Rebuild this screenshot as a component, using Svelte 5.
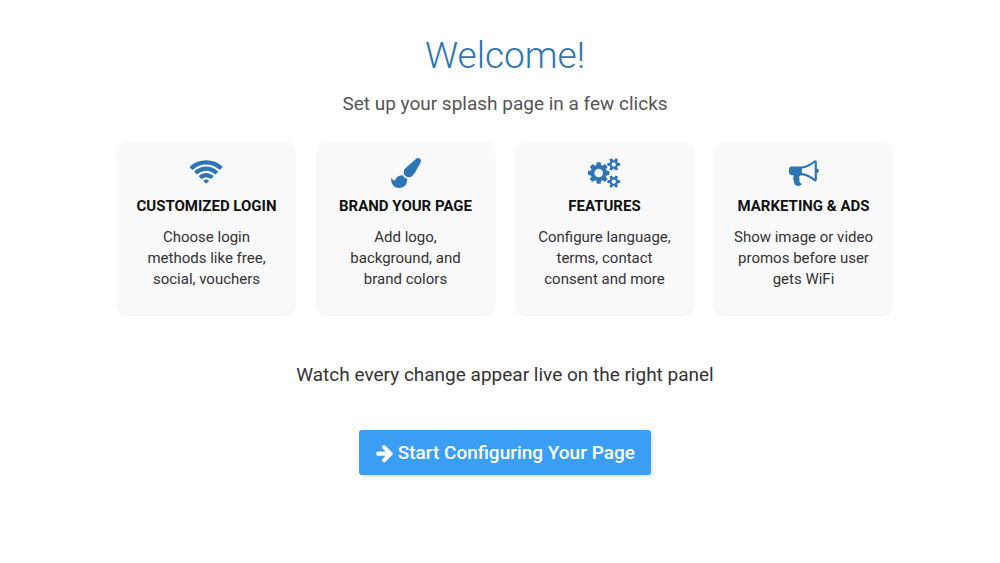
<script lang="ts">
	interface Feature {
		title: string;
		text: string;
		width: number;
		icon: string;
	}

	// icons share a 1792 unit em, width is the advance of the glyph
	const features: Feature[] = [
		{
			title: 'Customized login',
			text: 'Choose login methods like free, social, vouchers',
			width: 2048,
			icon: 'M1024 1523q-20 0-93-73.500t-73-93.500q0-32 62.500-54t103.500-22 103.500 22 62.500 54q0 20-73 93.500t-93 73.500zm270-271q-2 0-40-25t-101.500-50-128.500-25-128.500 25-101 50-40.500 25q-18 0-93.500-75t-75.500-93q0-13 10-23 78-77 196-121t233-44 233 44 196 121q10 10 10 23 0 18-75.500 93t-93.500 75zm273-272q-11 0-23-8-136-105-252-154.500t-268-49.500q-85 0-170.500 22t-149 53-113.500 62-79 53-31 22q-17 0-92-75t-75-93q0-12 10-22 132-132 320-205t380-73 380 73 320 205q10 10 10 22 0 18-75 93t-92 75zm271-271q-11 0-22-9-179-157-371.500-236.500t-420.500-79.500-420.500 79.500-371.500 236.500q-11 9-22 9-17 0-92.500-75t-75.500-93q0-13 10-23 187-186 445-288t527-102 527 102 445 288q10 10 10 23 0 18-75.500 93t-92.500 75z'
		},
		{
			title: 'Brand your page',
			text: 'Add logo, background, and brand colors',
			width: 1792,
			icon: 'M1615 0q70 0 122.500 46.500t52.500 116.500q0 63-45 151-332 629-465 752-97 91-218 91-126 0-216.500-92.500t-90.500-219.500q0-128 92-212l638-579q59-54 130-54zm-909 1034q39 76 106.500 130t150.500 76l1 71q4 213-129.500 347t-348.500 134q-123 0-218-46.500t-152.500-127.500-86.500-183-29-220q7 5 41 30t62 44.500 59 36.500 46 17q41 0 55-37 25-66 57.500-112.500t69.500-76 88-47.500 103-25.500 125-10.500z'
		},
		{
			title: 'Features',
			text: 'Configure language, terms, contact consent and more',
			width: 1920,
			icon: 'M896 896q0-106-75-181t-181-75-181 75-75 181 75 181 181 75 181-75 75-181zm768 512q0-52-38-90t-90-38-90 38-38 90q0 53 37.500 90.500t90.500 37.500 90.500-37.500 37.500-90.500zm0-1024q0-52-38-90t-90-38-90 38-38 90q0 53 37.500 90.500t90.500 37.500 90.500-37.500 37.500-90.500zm-384 421v185q0 10-7 19.500t-16 10.500l-155 24q-11 35-32 76 34 48 90 115 7 11 7 20 0 12-7 19-23 30-82.500 89.500t-78.500 59.500q-11 0-21-7l-115-90q-37 19-77 31-11 108-23 155-7 24-30 24h-186q-11 0-20-7.500t-10-17.500l-23-153q-34-10-75-31l-118 89q-7 7-20 7-11 0-21-8-144-133-144-160 0-9 7-19 10-14 41-53t47-61q-23-44-35-82l-152-24q-10-1-17-9.500t-7-19.500v-185q0-10 7-19.500t16-10.500l155-24q11-35 32-76-34-48-90-115-7-11-7-20 0-12 7-20 22-30 82-89t79-59q11 0 21 7l115 90q34-18 77-32 11-108 23-154 7-24 30-24h186q11 0 20 7.500t10 17.500l23 153q34 10 75 31l118-89q8-7 20-7 11 0 21 8 144 133 144 160 0 8-7 19-12 16-42 54t-45 60q23 48 34 82l152 23q10 2 17 10.500t7 19.500zm640 533v140q0 16-149 31-12 27-30 52 51 113 51 138 0 4-4 7-122 71-124 71-8 0-46-47t-52-68q-20 2-30 2t-30-2q-14 21-52 68t-46 47q-2 0-124-71-4-3-4-7 0-25 51-138-18-25-30-52-149-15-149-31v-140q0-16 149-31 13-29 30-52-51-113-51-138 0-4 4-7 4-2 35-20t59-34 30-16q8 0 46 46.500t52 67.500q20-2 30-2t30 2q51-71 92-112l6-2q4 0 124 70 4 3 4 7 0 25-51 138 17 23 30 52 149 15 149 31zm0-1024v140q0 16-149 31-12 27-30 52 51 113 51 138 0 4-4 7-122 71-124 71-8 0-46-47t-52-68q-20 2-30 2t-30-2q-14 21-52 68t-46 47q-2 0-124-71-4-3-4-7 0-25 51-138-18-25-30-52-149-15-149-31v-140q0-16 149-31 13-29 30-52-51-113-51-138 0-4 4-7 4-2 35-20t59-34 30-16q8 0 46 46.500t52 67.500q20-2 30-2t30 2q51-71 92-112l6-2q4 0 124 70 4 3 4 7 0 25-51 138 17 23 30 52 149 15 149 31z'
		},
		{
			title: 'Marketing & ads',
			text: 'Show image or video promos before user gets WiFi',
			width: 1792,
			icon: 'M1664 640q53 0 90.500 37.500t37.500 90.500-37.500 90.500-90.500 37.500v384q0 52-38 90t-90 38q-417-347-812-380-58 19-91 66t-31 100.500 40 92.500q-20 33-23 65.500t6 58 33.500 55 48 50 61.500 50.500q-29 58-111.500 83t-168.500 11.500-132-55.500q-7-23-29.500-87.500t-32-94.500-23-89-15-101 3.500-98.500 22-110.500h-122q-66 0-113-47t-47-113v-192q0-66 47-113t113-47h480q435 0 896-384 52 0 90 38t38 90v384zm-128 604v-954q-394 302-768 343v270q377 42 768 341z'
		}
	];
</script>

<main class="welcome">
	<h1>Welcome!</h1>
	<p class="lead">Set up your splash page in a few clicks</p>

	<div class="features">
		{#each features as feature}
			<section class="card">
				<svg class="card-icon" viewBox="0 0 {feature.width} 1792" aria-hidden="true">
					<path d={feature.icon} />
				</svg>
				<h2>{feature.title}</h2>
				<p>{feature.text}</p>
			</section>
		{/each}
	</div>

	<p class="hint">Watch every change appear live on the right panel</p>

	<button type="button" class="start">
		<svg viewBox="0 0 1664 1792" aria-hidden="true">
			<path
				d="M1600 960q0 54-37 91l-651 651q-39 37-91 37-51 0-90-37l-75-75q-38-38-38-91t38-91l293-293h-704q-52 0-84.500-37.500t-32.500-90.500v-128q0-53 32.500-90.500t84.500-37.500h704l-293-294q-38-36-38-90t38-90l75-75q38-38 90-38 53 0 91 38l651 651q37 35 37 90z"
			/>
		</svg>
		Start Configuring Your Page
	</button>
</main>

<style>
	:global(body) {
		margin: 0;
		background: #fff;
	}

	.welcome {
		display: flex;
		flex-direction: column;
		align-items: center;
		padding: 32px 20px 32px 30px;
		font-family: Roboto, 'Liberation Sans', sans-serif;
		color: #333;
		text-align: center;
	}

	h1 {
		margin: 0;
		font-size: 37px;
		font-weight: 300;
		line-height: 48px;
		color: #2e75b6;
	}

	.lead {
		margin: 10px 0 0;
		font-size: 19px;
		line-height: 28px;
		color: #555;
	}

	.features {
		display: grid;
		grid-template-columns: repeat(auto-fit, minmax(170px, 1fr));
		gap: 22px;
		width: 100%;
		max-width: 774px;
		margin-top: 24px;
	}

	.card {
		display: flex;
		flex-direction: column;
		align-items: center;
		padding: 16px 16px 24px;
		border-radius: 10px;
		background: #f9f9f9;
		box-shadow: 0 1px 3px rgba(0, 0, 0, 0.08);
	}

	.card-icon {
		height: 30px;
		fill: #2e75b6;
	}

	.card h2 {
		margin: 8px 0 0;
		font-size: 15px;
		font-weight: 700;
		line-height: 20px;
		text-transform: uppercase;
		color: #111;
	}

	.card p {
		margin: 11px 0 0;
		font-size: 15px;
		line-height: 21px;
	}

	.hint {
		margin: 47px 0 0;
		font-size: 19px;
		line-height: 28px;
	}

	.start {
		display: flex;
		align-items: center;
		gap: 4px;
		margin-top: 41px;
		padding: 9px 16px 8px;
		border: 0;
		border-radius: 3px;
		background: #3b9ef5;
		box-shadow: 2px 2px 5px rgba(0, 0, 0, 0.12);
		font-family: inherit;
		font-size: 19px;
		font-weight: 500;
		line-height: 28px;
		color: #fff;
		cursor: pointer;
	}

	.start svg {
		height: 20px;
		fill: currentColor;
	}
</style>
